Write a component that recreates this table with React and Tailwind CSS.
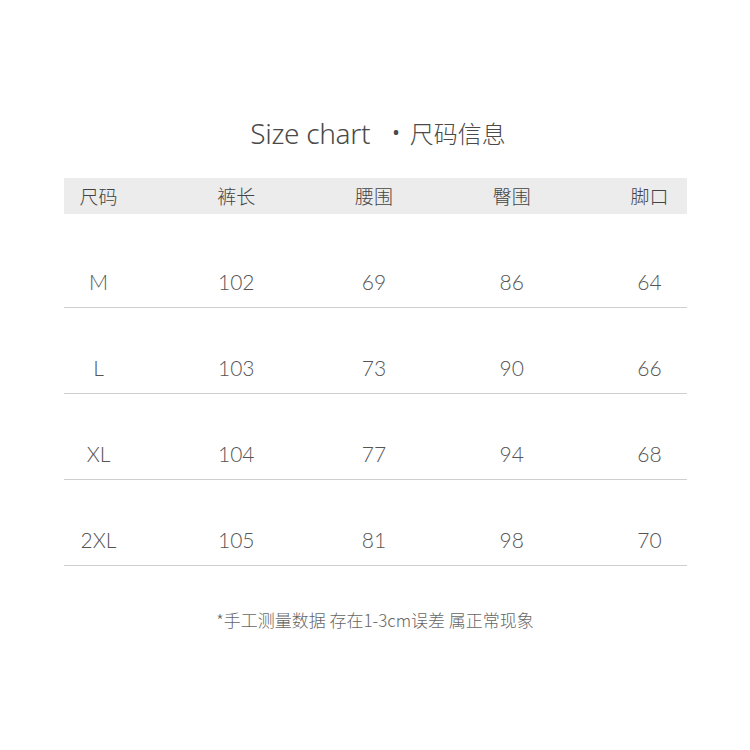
import React from 'react';

const cols = ['尺码', '裤长', '腰围', '臀围', '脚口'];
const rows = [
    ['M', '102', '69', '86', '64'],
    ['L', '103', '73', '90', '66'],
    ['XL', '104', '77', '94', '68'],
    ['2XL', '105', '81', '98', '70'],
];

const cjk = { fontFamily: '"Noto Sans CJK SC", sans-serif' };

export default function App() {
    return (
        <div className="w-[750px] h-[750px] bg-white flex flex-col items-center pt-[114px]" style={{ fontFamily: '"Noto Sans", "Noto Sans CJK SC", sans-serif' }}>
            <div className="flex items-center h-[38px] text-[#4a4a4a] pl-[6px]">
                <span className="text-[28px] font-light tracking-[-0.3px]">Size chart</span>
                <span className="ml-[22px] mr-[10px] text-[20px]">•</span>
                <span className="text-[24px] font-light" style={cjk}>尺码信息</span>
            </div>

            <div className="w-[623px] mt-[26px]">
                <div className="h-[36px] bg-[#ececec] flex items-center justify-between pr-[2px]">
                    {cols.map((c) => (
                        <div key={c} className="w-[70px] text-center text-[19px] font-light text-[#444]" style={cjk}>
                            {c}
                        </div>
                    ))}
                </div>

                <div className="mt-[8px]">
                    {rows.map((r, i) => (
                        <div key={i} className="h-[86px] flex items-end justify-between pr-[2px] pb-[11px] border-b border-[#cfcfcf]">
                            {r.map((v, j) => (
                                <div key={j} className="w-[70px] text-center text-[21px] font-light text-[#555] leading-[28px]" style={{ fontFamily: 'Lato, sans-serif' }}>
                                    {v}
                                </div>
                            ))}
                        </div>
                    ))}
                </div>
            </div>

            <div className="mt-[41px] text-[17px] font-light text-[#666]" style={cjk}>
                *手工测量数据 存在1-3cm误差 属正常现象
            </div>
        </div>
    );
}
